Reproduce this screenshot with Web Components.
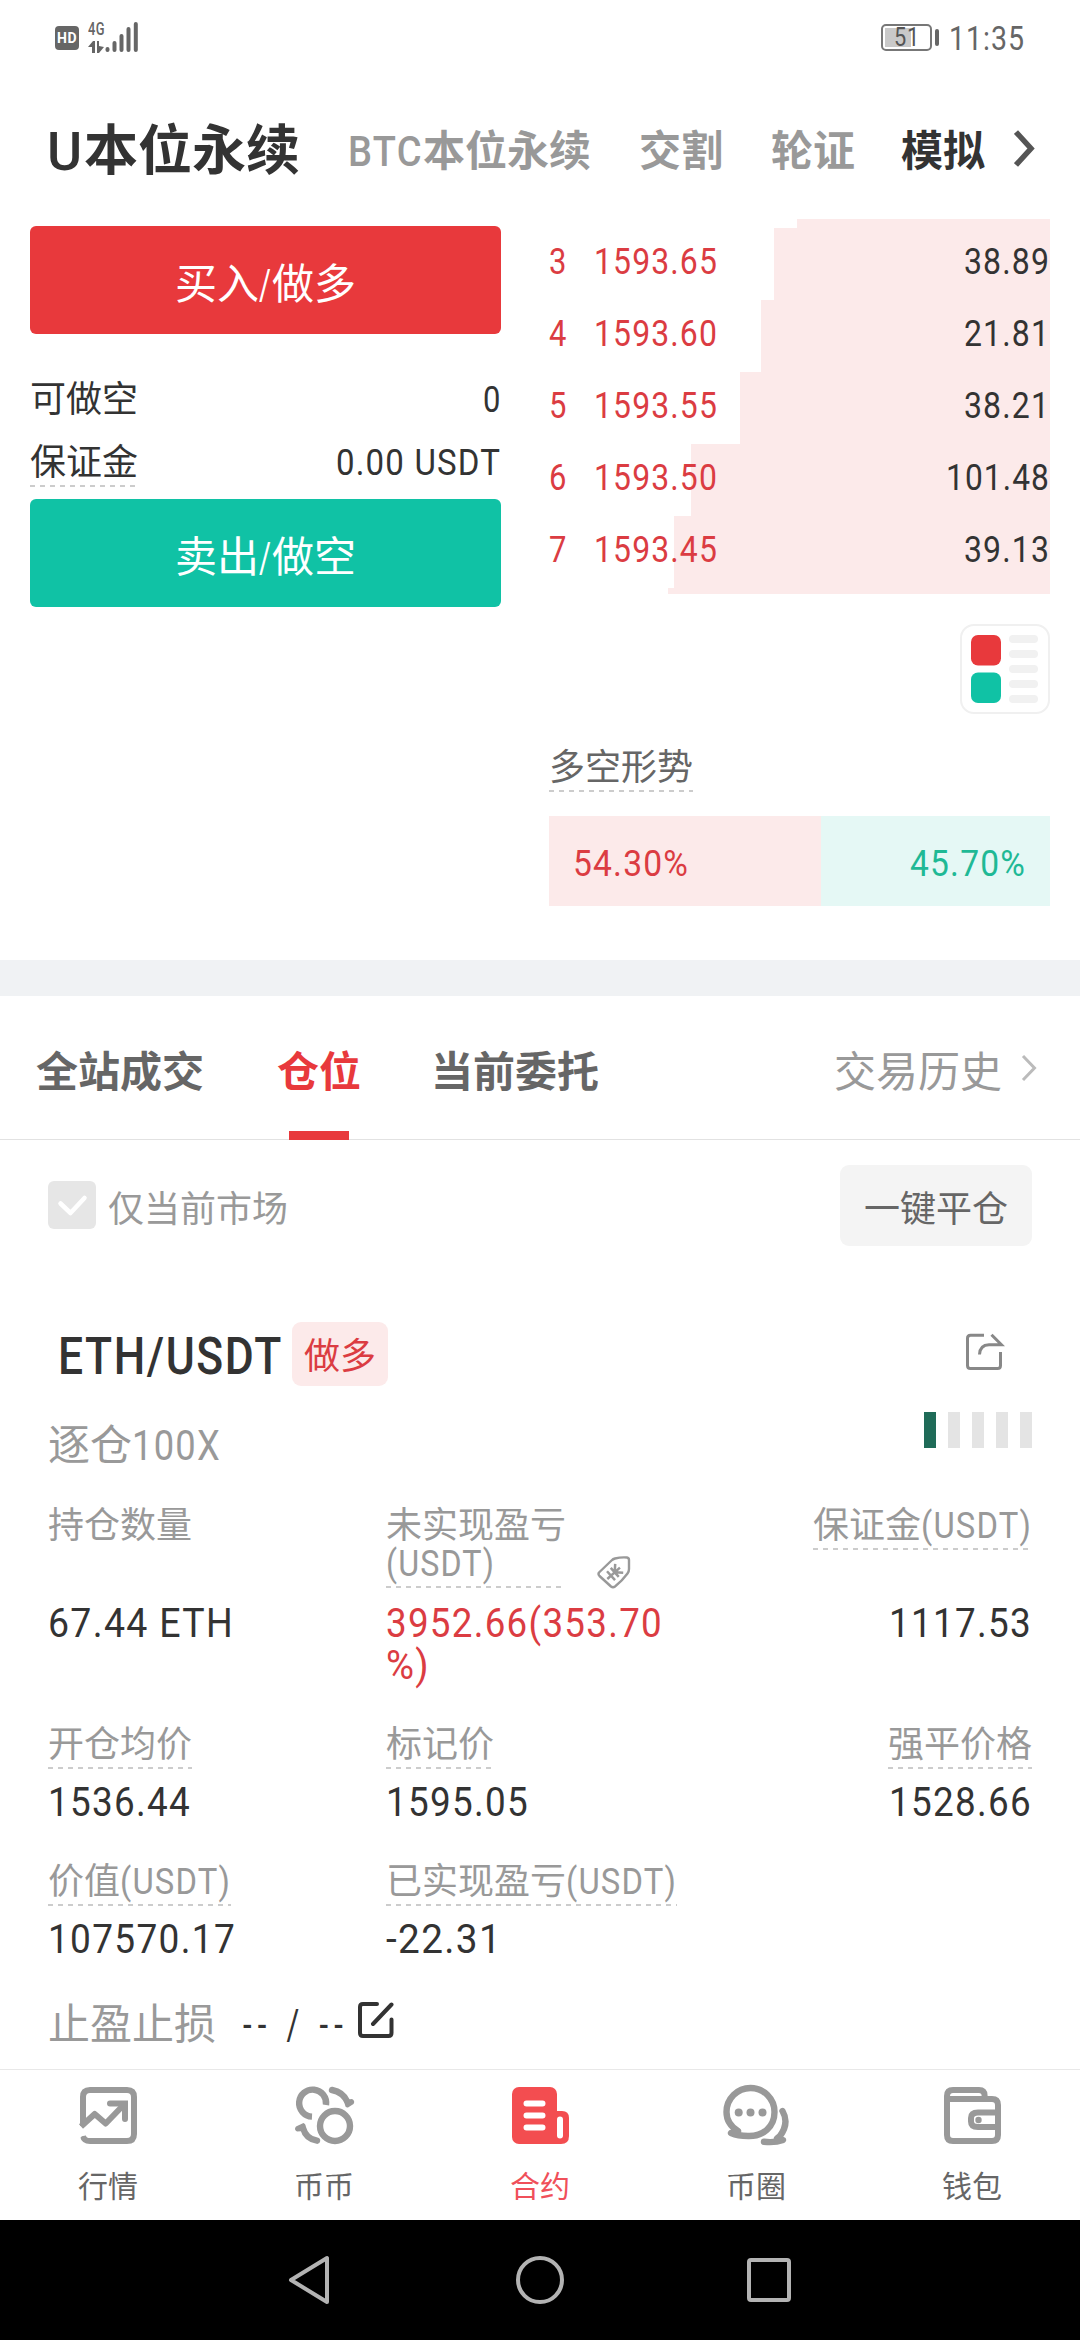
<!DOCTYPE html>
<html lang="zh-CN">
<head>
<meta charset="utf-8">
<title>合约</title>
<style>
html,body{margin:0;padding:0;background:#fff}
body{width:1080px;height:2340px;overflow:hidden;font-family:Roboto,"Noto Sans CJK SC",sans-serif;color:#333}
</style>
</head>
<body>
<trade-app></trade-app>
<script>
const define = (name, html, setup) => {
  const t = document.createElement('template');
  t.innerHTML = html;
  customElements.define(name, class extends HTMLElement {
    connectedCallback() {
      if (this.shadowRoot) return;
      this.attachShadow({mode: 'open'}).appendChild(t.content.cloneNode(true));
      if (setup) setup(this, this.shadowRoot);
    }
  });
};

define('status-bar', `<style>
:host{display:flex;justify-content:space-between;height:75px;padding:0 55px 0 55px;box-sizing:border-box;color:#666}
.l,.r{display:flex;align-items:flex-start}
.hd{width:24px;height:24px;margin-top:26px;border-radius:4px;background:#666;color:#fff;font:700 15px/25px Roboto,sans-serif;text-align:center}
.net{display:flex;flex-direction:column;margin:19px 0 0 9px;width:17px;font:500 19px/19px Roboto,sans-serif}
.net svg{margin-top:3px}
.bars{margin-top:21px}
.bat{width:47px;height:23px;border:2px solid #777;border-radius:5px;margin-top:24px;background:linear-gradient(90deg,#c9c9c9 26px,transparent 26px) 2px 2px/43px 19px no-repeat;font-size:25px;line-height:24px;text-align:center;color:#555}
.nub{width:4px;height:17px;border-radius:2px;background:#666;margin:29px 10px 0 3px}
.time{font-size:34px;line-height:40px;margin-top:18px}
</style>
<div class="l"><div class="hd"><din-text w="20">HD</din-text></div>
<div class="net"><din-text w="17">4G</din-text><svg width="17" height="12" viewBox="0 0 17 12" fill="#666"><path d="M0 6L5 0H7V12H4V6ZM9 0H11V5L16 6L11 12H9Z"/></svg></div>
<svg class="bars" width="34" height="32" viewBox="0 0 34 32" stroke="#666" stroke-width="4" stroke-linecap="round"><path d="M2.5 28v1M9.5 22v7M16.5 15v14M23.500 8v21M30.800 3v26"/></svg></div>
<div class="r"><div class="bat"><din-text w="26">51</din-text></div><div class="nub"></div><div class="time"><din-text w="76">11:35</din-text></div></div>`);

define('product-tabs', `<style>
:host{display:flex;height:144px;align-items:flex-start;padding-left:47px;box-sizing:border-box;font-weight:700;font-size:42px;line-height:60px;color:#999;white-space:nowrap;padding-top:47px}
.main{font-size:54px;color:#333}
div{height:60px;line-height:60px;margin-right:48px;display:flex}
.main{line-height:60px}
.main din-text,.b din-text{font-weight:500}
div.s{color:#333;margin-right:29px;margin-left:-2px}
svg{margin-top:6px}
</style>
<div class="main"><din-text w="37">U</din-text>本位永续</div><div class="b"><din-text w="75">BTC</din-text>本位永续</div><div>交割</div><div>轮证</div><div class="s">模拟</div>
<svg width="22" height="40" viewBox="0 0 22 40" fill="none" stroke="#555" stroke-width="5.5"><path d="M2 4L17 20.500L2 37"/></svg>`);

define('trade-button', `<style>
:host{display:block;height:108px;border-radius:6px;background:var(--fill);color:#fff;font-size:42px;line-height:118px;text-align:center}
</style><slot></slot>`);

define('dash-label', `<style>
:host{display:inline-block;white-space:nowrap;padding-bottom:5px;background:repeating-linear-gradient(90deg,#ccc 0 5px,transparent 5px 10px) 0 100%/100% 2px no-repeat}
</style><slot></slot>`);

define('info-row', `<style>
:host{display:flex;justify-content:space-between;align-items:flex-start;font-size:36px;line-height:38px;color:#333}
</style><slot></slot>`);

define('order-row', `<style>
:host{display:flex;height:72px;align-items:stretch;font-size:36.500px;line-height:68px;color:#333;background:linear-gradient(#fceaea,#fceaea) 100% 0/var(--depth) 100% no-repeat}
.n{width:45px;color:#db3c42}.p{color:#db3c42;flex:1}
</style><span class="n"></span><span class="p"></span><span class="a"></span>`, (el, r) => {
  const put = (sel, txt, w) => { r.querySelector(sel).innerHTML = `<din-text w="${w}">${txt}</din-text>`; };
  put('.n', el.getAttribute('n'), 18.5);
  put('.p', el.getAttribute('price'), 124);
  const a = el.getAttribute('amount');
  put('.a', a, a.length > 5 ? 104 : 86);
});

define('order-book', `<style>
:host{display:block}
.top,.bottom{background:#fceaea;margin-left:auto}
.top{width:253px;height:9px}.bottom{width:382px;height:6px}
</style><div class="top"></div>
<order-row n="3" price="1593.65" amount="38.89" style="--depth:276px"></order-row>
<order-row n="4" price="1593.60" amount="21.81" style="--depth:289px"></order-row>
<order-row n="5" price="1593.55" amount="38.21" style="--depth:310px"></order-row>
<order-row n="6" price="1593.50" amount="101.48" style="--depth:359px"></order-row>
<order-row n="7" price="1593.45" amount="39.13" style="--depth:376px"></order-row>
<div class="bottom"></div>`);

define('book-switch', `<style>:host{display:block;width:90px;height:90px;margin-left:auto}svg{display:block}</style>
<svg width="90" height="90" viewBox="0 0 90 90"><rect x="1" y="1" width="88" height="88" rx="13" fill="#fff" stroke="#f0f0f0" stroke-width="2"/>
<rect x="11" y="11" width="30" height="30.500" rx="7" fill="#e8393c"/><rect x="11" y="48.500" width="30" height="30.500" rx="7" fill="#10c2a5"/>
<g fill="#f1f1f1"><rect x="49" y="11" width="29" height="8" rx="4"/><rect x="49" y="26" width="29" height="8" rx="4"/><rect x="49" y="41" width="29" height="8" rx="4"/><rect x="49" y="56" width="29" height="8" rx="4"/><rect x="49" y="71" width="29" height="8" rx="4"/></g></svg>`);

define('ratio-bar', `<style>
:host{display:flex;height:90px;font-size:36.500px;line-height:95px}
.a{width:54.300%;background:#fceaea;color:#db3c42;padding-left:24px;box-sizing:border-box}
.b{flex:1;background:#e5f8f5;color:#1fb995;padding-right:24px;text-align:right}
</style><div class="a"><din-text w="116">54.30%</din-text></div><div class="b"><din-text w="116">45.70%</din-text></div>`);

define('trade-panel', `<style>
:host{display:flex;height:741px;padding:0 30px;box-sizing:border-box;justify-content:space-between}
.l{width:471px;padding-top:7px}
.r{width:501px}
.one{margin-top:47px;height:63px}.two{height:55px}
book-switch{margin-top:30px}
.t{font-size:36px;line-height:38px;color:#666;margin-top:35px;height:67px}
</style>
<div class="l"><trade-button style="--fill:#e8393c">买入<din-text w="13">/</din-text>做多</trade-button>
<info-row class="one"><span>可做空</span><din-text w="18.5">0</din-text></info-row>
<info-row class="two"><dash-label>保证金</dash-label><din-text w="165">0.00 USDT</din-text></info-row>
<trade-button style="--fill:#10c2a5">卖出<din-text w="13">/</din-text>做空</trade-button></div>
<div class="r"><order-book></order-book><book-switch></book-switch>
<div class="t"><dash-label>多空形势</dash-label></div><ratio-bar></ratio-bar></div>`);

define('section-tabs', `<style>
:host{display:flex;height:144px;box-sizing:border-box;border-bottom:1px solid #e2e2e2;padding:0 43px 0 36px;font-size:42px;font-weight:700;color:#666;line-height:153px;white-space:nowrap}
span{margin-right:73px;height:144px}
.on{color:#e8393c;margin-right:70px;background:linear-gradient(#e8393c,#e8393c) 50% 100%/60px 9px no-repeat}
.h{margin-left:auto;margin-right:19px;font-weight:400;color:#999}
svg{margin-top:58px}
</style><span>全站成交</span><span class="on">仓位</span><span>当前委托</span><span class="h">交易历史</span>
<svg width="16" height="28" viewBox="0 0 16 28" fill="none" stroke="#bbb" stroke-width="3"><path d="M2 2L13.500 14L2 26"/></svg>`);

define('filter-row', `<style>
:host{display:flex;height:182px;padding:25px 48px 0;box-sizing:border-box;font-size:36px;color:#999}
svg{margin-top:16px}
label{margin-left:12px;line-height:90px}
.btn{margin-left:auto;width:192px;height:81px;border-radius:9px;background:#f4f4f4;color:#666;text-align:center;line-height:90px}
</style><svg width="48" height="48" viewBox="0 0 48 48"><rect width="48" height="48" rx="6" fill="#e6e6e6"/><path d="M12.500 22.500L22.500 32L36.500 17" fill="none" stroke="#fff" stroke-width="4.500" stroke-linecap="round" stroke-linejoin="round"/></svg>
<label>仅当前市场</label><div class="btn">一键平仓</div>`);

define('position-head', `<style>
:host{display:block;height:185px;padding:0 48px 0 58px}
.a{display:flex;height:64px;align-items:flex-start}
.sym{font-size:51px;font-weight:500;line-height:70px}
.tag{margin-left:9px;width:96px;height:64px;border-radius:9px;background:#fceaea;color:#db3c42;font-size:36px;line-height:71px;text-align:center}
.share{margin:9px 27px 0 auto}
.b{display:flex;justify-content:space-between;margin:33px 0 0 -10px;font-size:42px;line-height:54px;color:#999}
.lv{display:flex;gap:12px;margin-top:-7px}
.lv i{width:12px;height:36px;background:#e4e4e4}.lv i:first-child{background:#1f6b58}
</style><div class="a"><din-text class="sym" w="225">ETH/USDT</din-text><span class="tag">做多</span>
<svg class="share" width="41" height="41" viewBox="0 0 41 41" fill="none" stroke="#888" stroke-width="3"><path d="M20 4.300H6.500Q3.500 4.300 3.500 7.300V34.500Q3.500 37.500 6.500 37.500H33.500Q36.500 37.500 36.500 34.500V21"/><path d="M15.500 23.500Q16 14 25 13.800H37.500L27.500 3.800"/></svg></div>
<div class="b"><span>逐仓<din-text w="89">100X</din-text></span><div class="lv"><i></i><i></i><i></i><i></i><i></i></div></div>`);

define('data-cell', `<style>
:host{display:flex;flex-direction:column;align-items:flex-start}
:host([end]){align-items:flex-end;margin-left:auto;text-align:right}
.l{height:var(--lab,55px);font-size:36px;line-height:38px;color:#999;display:flex}
.v{font-size:41.500px;line-height:42px;color:#333;white-space:nowrap}
</style><div class="l"><slot name="label"></slot></div><div class="v"><slot></slot></div>`);

define('position-data', `<style>
:host{display:block;padding:0 48px;color:#333}
.r{display:flex;height:137px}.first{height:219px;--lab:95px}
.c1{width:338px}
.up{color:#db3c42}
dash-label{align-self:flex-start}
.pnl{width:180px;background-size:176px 2px}
.lw{display:flex}
.lw svg{margin:46px 0 0 29px}
.sl{display:flex;font-size:42px;line-height:50px;color:#999;height:69px}
.sl din-text{margin-left:27px;color:#333;letter-spacing:.2em}
.sl svg{margin-left:7px}
</style>
<div class="r first"><data-cell class="c1"><span slot="label">持仓数量</span><din-text w="186">67.44 ETH</din-text></data-cell>
<data-cell><span slot="label" class="lw"><dash-label class="pnl">未实现盈亏<br><din-text w="109">(USDT)</din-text></dash-label>
<svg width="38" height="38" viewBox="0 0 38 38" fill="none" stroke="#999" stroke-width="2.400" stroke-linejoin="round"><path d="M4 19.500L16.500 7.500Q18 6 20 5.500Q26 4 32 4.500Q34 4.800 34 7V16Q34 18.500 32.500 20.500Q27 28 20 33.500Q18 35 16 33.500L4.500 23Q2.800 21.300 4 19.500Z"/><g transform="translate(19 20) rotate(48)" stroke-width="2.500"><path d="M-6-7L0-1L6-7M0-8V9M-6-1H6M-6 4H6"/></g></svg></span>
<span class="up"><din-text w="277">3952.66(353.70</din-text><br><din-text w="44">%)</din-text></span></data-cell>
<data-cell end><dash-label slot="label">保证金<din-text w="111">(USDT)</din-text></dash-label><din-text w="143">1117.53</din-text></data-cell></div>
<div class="r"><data-cell class="c1"><dash-label slot="label">开仓均价</dash-label><din-text w="143">1536.44</din-text></data-cell>
<data-cell><dash-label slot="label">标记价</dash-label><din-text w="143">1595.05</din-text></data-cell>
<data-cell end><dash-label slot="label">强平价格</dash-label><din-text w="143">1528.66</din-text></data-cell></div>
<div class="r"><data-cell class="c1"><dash-label slot="label">价值<din-text w="111">(USDT)</din-text></dash-label><din-text w="188">107570.17</din-text></data-cell>
<data-cell><dash-label slot="label">已实现盈亏<din-text w="111">(USDT)</din-text></dash-label><din-text w="116">-22.31</din-text></data-cell></div>
<div class="sl"><span>止盈止损</span><din-text w="106">-- / --</din-text>
<svg width="40" height="40" viewBox="0 0 40 40" fill="none" stroke="#333" stroke-width="4" stroke-linecap="round"><path d="M21 4H7Q4 4 4 7V33Q4 36 7 36H32.500Q35.500 36 35.500 33V19.500M17 24L35.500 4.500"/></svg></div>`);

const icons = {
market: `<g fill="none" stroke="#999" stroke-width="6"><path d="M11 43V14Q11 7 18 7H55Q62 7 62 14V51Q62 58 55 58H18Q12 58 11 53"/><path d="M9 43.500L22.700 31L33.700 40.500L52 21.500" stroke-linejoin="round"/><path d="M38 20.500H53V36" stroke-linecap="round"/></g><path d="M7 50L15 43V48L8 55Z" fill="#fff"/>`,
coin: `<g fill="none" stroke="#999" stroke-width="6.400"><circle cx="47" cy="43" r="15"/><path d="M38 22A13.500 13.500 0 1 0 24 33.600"/><g stroke-linecap="round"><path d="M44 7Q55 9 59.500 19"/><path d="M29 57.700Q18 56 15 45"/></g></g><path d="M56 17L64 16Q67.500 18 65.500 21L60 24.500Q57.500 25 57 22ZM15.500 40Q18 41 17.500 44L16.500 48L9 48.500Q5.500 46.500 8 43.500Z" fill="#999"/>`,
contract: `<rect x="8" y="4" width="45" height="57" rx="7" fill="#f34d50"/><path d="M46 28H58Q65 28 65 35V53Q65 61 57 61H46Z" fill="#f34d50"/><rect x="53" y="33.500" width="6" height="22" rx="3" fill="#fff"/><path d="M22.500 20.500H38.500M22.500 32.500H38.500M22.500 44.500H38.500" stroke="#fff" stroke-width="6" stroke-linecap="round"/>`,
circle: `<g fill="none" stroke="#999" stroke-width="6.400" stroke-linecap="round" stroke-linejoin="round"><path d="M18 48Q6.500 41 6.500 29A24 24 0 0 1 54.500 29C54.500 44 43 53.500 28 53Q18 53 11 50Q15 50 18 48"/><path d="M62.500 28Q69.500 40 60 53L57 55.500L63 57Q55 60 44 58.800"/></g><g fill="#999"><circle cx="18.700" cy="29.500" r="4"/><circle cx="30.500" cy="29.500" r="4"/><circle cx="42.500" cy="29.500" r="4"/></g>`,
wallet: `<g fill="none" stroke="#999" stroke-width="6"><path d="M11 18V13Q11 7 17 7H43Q48.600 7 48.600 12.500V16"/><path d="M11 16H56Q62 16 62 22V52Q62 58 56 58H17Q11 58 11 52Z"/><path d="M62 29.500H42Q35 29.500 35 35V38.500Q35 44 42 44H62"/></g><circle cx="42.500" cy="37" r="3.200" fill="#999"/>`
};
define('nav-item', `<style>
:host{display:flex;flex-direction:column;align-items:center;width:216px;padding-top:13px;font-size:30px;line-height:36px;color:#666}
:host([on]){color:#f0505a}
svg{margin-bottom:22px}
</style><svg width="72" height="64" viewBox="0 0 72 64"></svg><slot></slot>`, (el, r) => { r.querySelector('svg').innerHTML = icons[el.getAttribute('icon')]; });

define('bottom-nav', `<style>:host{display:flex;height:151px;box-sizing:border-box;border-top:1px solid #e8e8e8}</style>
<nav-item icon="market">行情</nav-item><nav-item icon="coin">币币</nav-item><nav-item icon="contract" on>合约</nav-item><nav-item icon="circle">币圈</nav-item><nav-item icon="wallet">钱包</nav-item>`);

define('system-nav', `<style>:host{display:flex;height:120px;background:#000;align-items:center;justify-content:center;gap:180px}svg{display:block}</style>
<svg width="50" height="50" viewBox="0 0 50 50" fill="none" stroke="#b3b3b3" stroke-width="4" stroke-linejoin="round"><path d="M42 3V47L6 25Z"/></svg>
<svg width="50" height="50" viewBox="0 0 50 50" fill="none" stroke="#b3b3b3" stroke-width="4"><circle cx="25" cy="25" r="22"/></svg>
<svg width="50" height="50" viewBox="0 0 50 50" fill="none" stroke="#b3b3b3" stroke-width="4"><rect x="4" y="5" width="40" height="40" rx="2"/></svg>`);

define('trade-app', `<style>
:host{display:flex;flex-direction:column;width:1080px;height:2340px;background:#fff}
.band{height:36px;background:#f0f2f4}
</style><status-bar></status-bar><product-tabs></product-tabs><trade-panel></trade-panel><div class="band"></div>
<section-tabs></section-tabs><filter-row></filter-row><position-head></position-head><position-data></position-data><bottom-nav></bottom-nav><system-nav></system-nav>`);

// Latin text and figures, condensed to the advance width given in "w".
define('din-text', `<style>
:host{display:inline-block;white-space:pre;text-align:left;letter-spacing:.035em}
span{display:inline-block;transform-origin:0 50%}
</style><span><slot></slot></span>`, (el, r) => {
  const w = parseFloat(el.getAttribute('w'));
  const s = r.querySelector('span');
  const natural = s.getBoundingClientRect().width;
  el.style.width = w + 'px';
  if (natural) s.style.transform = `scaleX(${w / natural})`;
});
</script>
</body>
</html>
